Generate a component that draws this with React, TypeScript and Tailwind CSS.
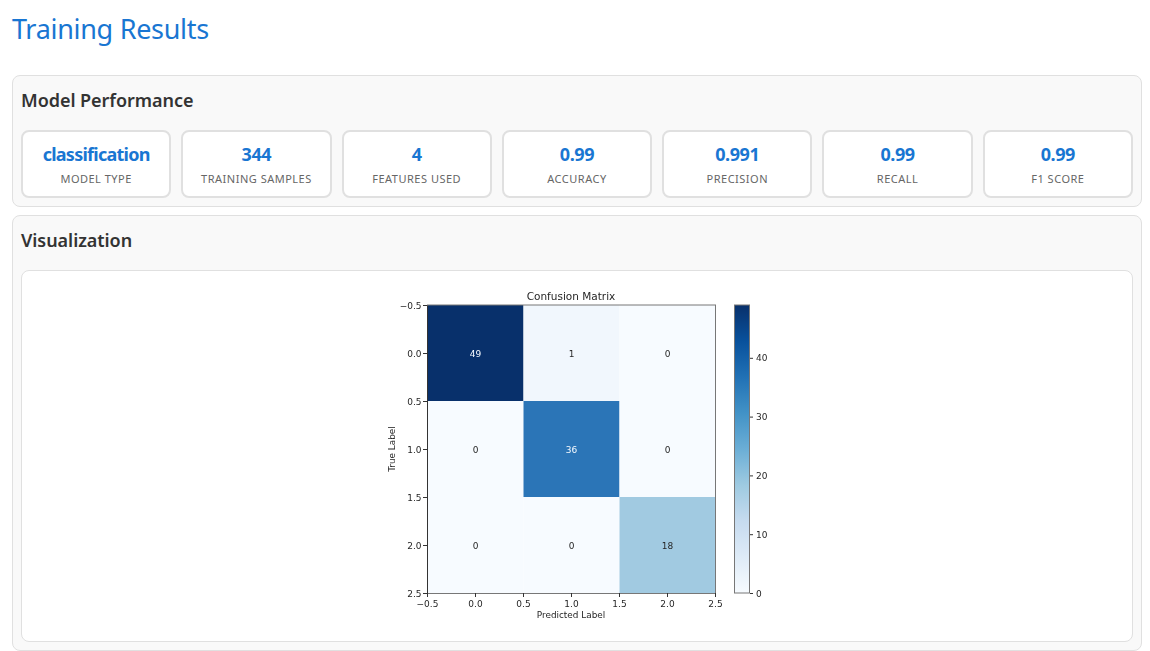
const font = { fontFamily: '"DejaVu Sans", sans-serif' };

const metrics = [
  ["classification", "Model Type"],
  ["344", "Training Samples"],
  ["4", "Features Used"],
  ["0.99", "Accuracy"],
  ["0.991", "Precision"],
  ["0.99", "Recall"],
  ["0.99", "F1 Score"],
];

const xTicks = [
  [427.5, "−0.5"],
  [475.5, "0.0"],
  [523.5, "0.5"],
  [571.5, "1.0"],
  [619.5, "1.5"],
  [667.5, "2.0"],
  [715.5, "2.5"],
] as const;

const yTicks = [
  [305, "−0.5"],
  [353, "0.0"],
  [401, "0.5"],
  [449, "1.0"],
  [497, "1.5"],
  [545, "2.0"],
  [593, "2.5"],
] as const;

const barTicks = [
  [593, "0"],
  [534.2, "10"],
  [475.4, "20"],
  [416.6, "30"],
  [357.8, "40"],
] as const;

const cells = [
  [427.5, 305, "#08306b", "49", "#f7fbff"],
  [523.5, 305, "#f1f7fd", "1", "#262626"],
  [619.5, 305, "#f7fbff", "0", "#262626"],
  [427.5, 401, "#f7fbff", "0", "#262626"],
  [523.5, 401, "#2b75b7", "36", "#f7fbff"],
  [619.5, 401, "#f7fbff", "0", "#262626"],
  [427.5, 497, "#f7fbff", "0", "#262626"],
  [523.5, 497, "#f7fbff", "0", "#262626"],
  [619.5, 497, "#a1cae1", "18", "#262626"],
] as const;

function Chart() {
  return (
    <svg width="400" height="340" viewBox="377 288 400 340" style={font} fill="#262626" className="blur-[0.35px]">
      <defs>
        <linearGradient id="blues" x1="0" y1="1" x2="0" y2="0">
          <stop offset="0" stopColor="#f7fbff" />
          <stop offset="0.125" stopColor="#deebf7" />
          <stop offset="0.25" stopColor="#c6dbef" />
          <stop offset="0.375" stopColor="#9ecae1" />
          <stop offset="0.5" stopColor="#6baed6" />
          <stop offset="0.625" stopColor="#4292c6" />
          <stop offset="0.75" stopColor="#2171b5" />
          <stop offset="0.875" stopColor="#08519c" />
          <stop offset="1" stopColor="#08306b" />
        </linearGradient>
      </defs>
      <text x="571" y="300" textAnchor="middle" fontSize="10.5">Confusion Matrix</text>
      {cells.map(([x, y, bg, label, color], i) => (
        <g key={i}>
          <rect x={x} y={y} width="96" height="96" fill={bg} />
          <text x={x + 48} y={y + 51.5} textAnchor="middle" fontSize="9" fill={color}>{label}</text>
        </g>
      ))}
      <path d="M427.5 593V305" stroke="#333" />
      <path d="M427 305H716M715.5 305V593.5M427 593.5H716" stroke="#777" />
      {xTicks.map(([x, label]) => (
        <g key={label}>
          <path d={`M${x} 593V597`} stroke="#333" />
          <text x={x} y="606.5" textAnchor="middle" fontSize="9">{label}</text>
        </g>
      ))}
      {yTicks.map(([y, label]) => (
        <g key={label}>
          <path d={`M423 ${y + 0.5}H427`} stroke="#333" />
          <text x="421.5" y={y + 3.5} textAnchor="end" fontSize="9">{label}</text>
        </g>
      ))}
      <text x="571" y="618" textAnchor="middle" fontSize="8.9">Predicted Label</text>
      <text transform="translate(395 449) rotate(-90)" textAnchor="middle" fontSize="8.9">True Label</text>
      <rect x="734.5" y="305" width="15" height="288" fill="url(#blues)" stroke="#777" />
      {barTicks.map(([y, label]) => (
        <g key={label}>
          <path d={`M750 ${y + 0.5}H753`} stroke="#333" />
          <text x="756" y={y + 3.5} fontSize="9">{label}</text>
        </g>
      ))}
    </svg>
  );
}

export default function App() {
  return (
    <div className="h-[651px] overflow-hidden bg-white pr-2 pl-3 text-[#333]" style={{ fontFamily: '"Noto Sans", "Open Sans", sans-serif' }}>
      <h1 className="pt-[9px] pb-[26px] text-[27px] leading-[40px] font-normal tracking-[-0.3px] text-[#1976d2]">Training Results</h1>
      <section className="mb-2 h-[132px] rounded-lg border border-[#e0e0e0] bg-[#f9f9f9] px-2 pt-[10px]">
        <h2 className="mb-4 text-lg leading-[28px] font-semibold tracking-[-0.05px]">Model Performance</h2>
        <div className="grid grid-cols-7 gap-[10px]">
          {metrics.map(([value, label]) => (
            <div key={label} className="flex h-[68px] flex-col items-center rounded-lg border-2 border-[#e0e0e0] bg-white pt-2">
              <div className={value === "classification" ? "text-lg leading-[28px] font-bold tracking-[-0.75px] text-[#1976d2]" : "text-lg leading-[28px] font-bold tracking-[-0.4px] text-[#1976d2]"}>{value}</div>
              <div className="mt-[3px] text-[11px] leading-[16px] tracking-[0.5px] text-[#666] uppercase">{label}</div>
            </div>
          ))}
        </div>
      </section>
      <section className="h-[436px] rounded-lg border border-[#e0e0e0] bg-[#f9f9f9] px-2 pt-[10px]">
        <h2 className="mb-4 text-lg leading-[28px] font-semibold tracking-[-0.05px]">Visualization</h2>
        <div className="flex h-[372px] justify-center rounded-lg border border-[#e0e0e0] bg-white pt-[17px]">
          <Chart />
        </div>
      </section>
    </div>
  );
}
